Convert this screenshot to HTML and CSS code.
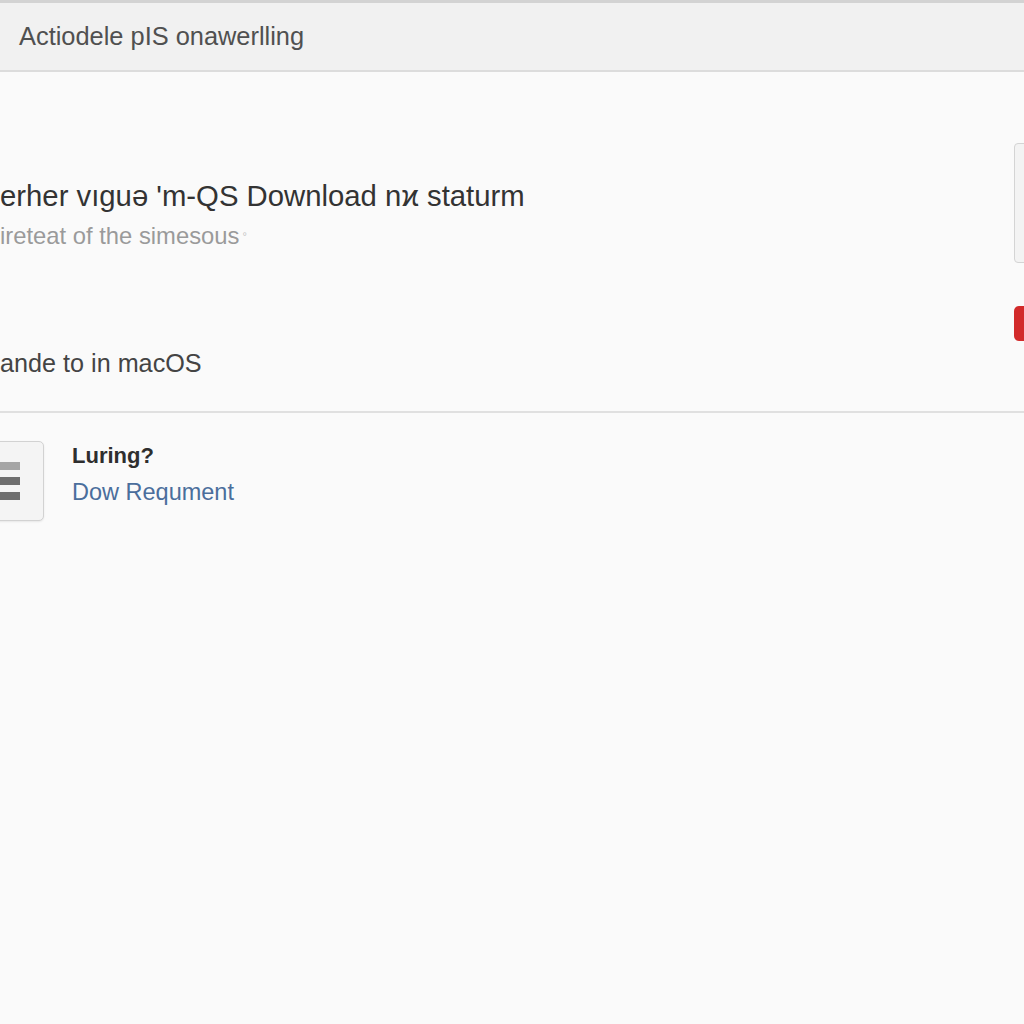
FILE: index.html
```html
<!DOCTYPE html>
<html>
<head>
<meta charset="utf-8">
<link rel="stylesheet" href="styles.css">
</head>
<body>
<div class="page">
  <header class="topbar">
    <span class="topbar-title">Actiodele pIS onawerlling</span>
  </header>
  <section class="hero">
    <div class="hero-left">
      <h1 class="title">erher vıguə 'm-QS Download nϰ staturm</h1>
      <p class="subtitle">ireteat of the simesous<sup class="mark">°</sup></p>
      <p class="platform">ande to in macOS</p>
    </div>
    <div class="hero-right">
      <div class="side-box"></div>
      <div class="side-btn"></div>
    </div>
  </section>
  <hr class="divider">
  <div class="item">
    <div class="item-icon">
      <span class="bar"></span>
      <span class="bar"></span>
      <span class="bar"></span>
    </div>
    <div class="item-text">
      <div class="item-title">Luring?</div>
      <a class="item-link">Dow Requment</a>
    </div>
  </div>
</div>
</body>
</html>
```
FILE: styles.css
```css
html, body {
  margin: 0;
  padding: 0;
  width: 1024px;
  height: 1024px;
  overflow: hidden;
  background: #fafafa;
  font-family: "Liberation Sans", Arial, sans-serif;
}
.page {
  width: 1024px;
  height: 1024px;
  overflow: hidden;
}
.topbar {
  height: 67px;
  border-top: 3px solid #d3d3d3;
  border-bottom: 2px solid #dcdcdc;
  background: #f1f1f1;
  display: flex;
  align-items: center;
  padding-left: 19px;
}
.topbar-title {
  font-size: 25.4px;
  color: #505050;
  margin-top: -1px;
}
.hero {
  display: flex;
  justify-content: space-between;
  align-items: flex-start;
  padding-top: 71px;
}
.hero-left {
  padding-top: 36px;
}
.title {
  margin: 0;
  font-weight: normal;
  font-size: 29.3px;
  color: #333;
  line-height: 34px;
}
.subtitle {
  margin: 9px 0 0 0;
  font-size: 23.8px;
  color: #9a9a9a;
  line-height: 28px;
}
.mark {
  font-size: 11px;
  color: #c4c4c4;
  vertical-align: top;
  margin-left: 3px;
}
.platform {
  margin: 98px 0 0 0;
  font-size: 25.2px;
  color: #444;
  line-height: 30px;
}
.hero-right {
  width: 60px;
  margin-right: -50px;
  display: flex;
  flex-direction: column;
  gap: 43px;
}
.side-box {
  height: 118px;
  border: 1px solid #d4d4d4;
  border-radius: 4px;
  background: #f3f3f3;
}
.side-btn {
  height: 35px;
  border-radius: 5px;
  background: #d22a2a;
}
.divider {
  margin: 33px 0 0;
  border: 0;
  border-top: 2px solid #e0e0e0;
}
.item {
  display: flex;
  align-items: flex-start;
  gap: 28px;
  margin-top: 28px;
  margin-left: -36px;
}
.item-icon {
  width: 80px;
  height: 80px;
  border: 1px solid #d2d2d2;
  border-radius: 5px;
  background: #f4f4f4;
  display: flex;
  flex-direction: column;
  justify-content: center;
  gap: 7px;
  box-sizing: border-box;
  box-shadow: 0 1px 2px rgba(0,0,0,0.08);
}
.bar {
  display: block;
  width: 55px;
  height: 8px;
  background: #6e6e6e;
}
.bar:first-child {
  background: #a5a5a5;
}
.item-text {
  padding-top: 2px;
}
.item-title {
  font-size: 22px;
  font-weight: bold;
  color: #2e2e2e;
  line-height: 26px;
}
.item-link {
  display: block;
  margin-top: 9px;
  font-size: 23.5px;
  color: #4a6e9c;
  line-height: 28px;
}
```
